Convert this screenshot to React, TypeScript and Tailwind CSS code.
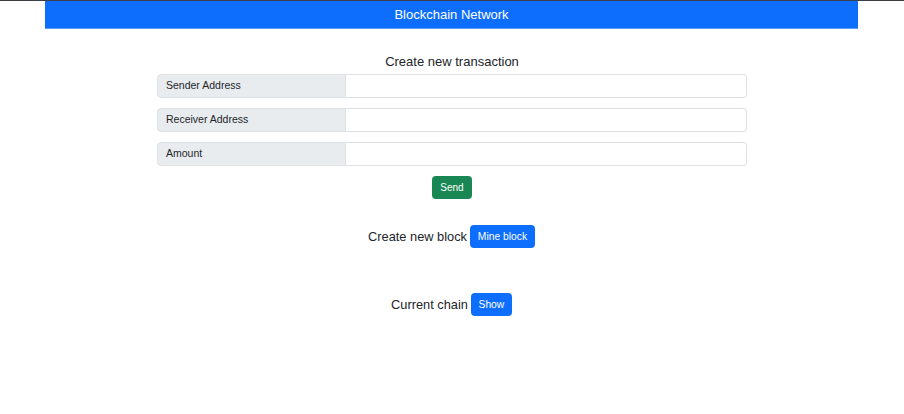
import React from 'react';

const fields = ['Sender Address', 'Receiver Address', 'Amount'];

const App: React.FC = () => {
  return (
    <div
      className="min-h-[414px] w-[904px] bg-white text-[#212529]"
      style={{ fontFamily: '"Liberation Sans", Arial, sans-serif' }}
    >
      <div className="h-px w-full bg-[#3b3e45]" />
      <div className="ml-[45px] flex h-[28px] w-[813px] items-center justify-center border-b border-[#5a9bfd] bg-[#0d6efd] text-[13px] text-white">
        Blockchain Network
      </div>

      <div className="mx-auto flex w-[590px] flex-col items-center pt-[25px]">
        <h3 className="text-[13px] font-medium leading-[16px]">Create new transaction</h3>

        <div className="mt-[4px] flex w-full flex-col gap-[10px]">
          {fields.map((label) => (
            <div key={label} className="flex h-[24px] w-full">
              <span className="flex w-[189px] items-center rounded-l-[4px] border border-[#dee2e6] bg-[#e9ecef] pl-[8px] text-[10.5px]">
                {label}
              </span>
              <input
                type="text"
                className="flex-1 rounded-r-[4px] border border-l-0 border-[#dee2e6] bg-white"
              />
            </div>
          ))}
        </div>

        <button className="mt-[10px] h-[23px] w-[40px] rounded-[4px] bg-[#198754] text-[10px] text-white">
          Send
        </button>

        <div className="mt-[26px] flex items-center gap-[3px] pr-[1px]">
          <span className="text-[12.8px] font-medium">Create new block</span>
          <button className="h-[23px] w-[65px] rounded-[4px] bg-[#0d6efd] text-[10.3px] text-white">
            Mine block
          </button>
        </div>

        <div className="mt-[45px] flex items-center gap-[3px] pr-[1px]">
          <span className="text-[12.8px] font-medium">Current chain</span>
          <button className="h-[23px] w-[41px] rounded-[4px] bg-[#0d6efd] text-[10.3px] text-white">
            Show
          </button>
        </div>
      </div>
    </div>
  );
};

export default App;
